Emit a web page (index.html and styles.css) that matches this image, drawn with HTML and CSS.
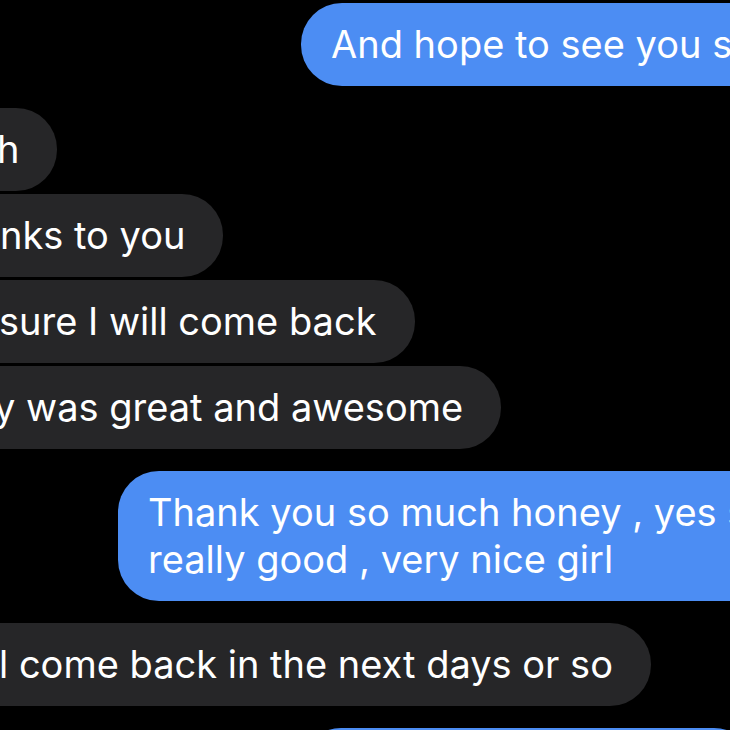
FILE: index.html
```html
<!DOCTYPE html>
<html lang="en">
<head>
<meta charset="utf-8">
<title>Messages</title>
<link rel="stylesheet" href="styles.css">
</head>
<body>
<div class="thread">
  <div class="bubble sent s1">And hope to see you soon</div>
  <div class="bubble recv r1 first">h</div>
  <div class="bubble recv r2">nks to you</div>
  <div class="bubble recv r3">sure I will come back</div>
  <div class="bubble recv r4">y was great and awesome</div>
  <div class="bubble sent s2 first">Thank you so much honey , yes she is<br>really good , very nice girl</div>
  <div class="bubble recv r5 first">l come back in the next days or so</div>
  <div class="bubble sent s3 first">See you soon honey</div>
</div>
</body>
</html>
```
FILE: styles.css
```css
html, body {
  margin: 0;
  padding: 0;
  background: #000;
}

.thread {
  width: 730px;
  height: 730px;
  overflow: hidden;
  display: flex;
  flex-direction: column;
  align-items: flex-start;
  padding-top: 3px;
  box-sizing: border-box;
}

.bubble {
  font-family: Inter, "Noto Sans", sans-serif;
  font-size: 38px;
  line-height: 47px;
  color: #fff;
  padding: 18px 0;
  border-radius: 41px;
  white-space: nowrap;
  flex-shrink: 0;
  margin-top: 3px;
}

.bubble.first {
  margin-top: 22px;
}

.s1.bubble {
  margin-top: 0;
}

.sent {
  background: #4c8df3;
  padding-left: 30px;
  padding-right: 60px;
}

.recv {
  background: #262628;
  padding-right: 38px;
  border-top-left-radius: 0;
  border-bottom-left-radius: 0;
}

.s1 { margin-left: 301px; }
.s2 { margin-left: 118px; }
.s3 { margin-left: 300px; }

.r1 { margin-left: -3px; }
.r2 { margin-left: 0; }
.r3 { margin-left: -1px; }
.r4 { margin-left: -6px; }
.r5 { margin-left: -1px; }
```
